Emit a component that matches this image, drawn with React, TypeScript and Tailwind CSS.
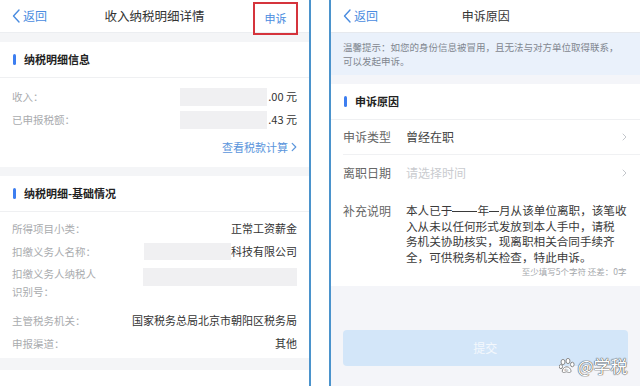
import React from "react";

function BackIcon() {
  return (
    <svg width="8" height="14" viewBox="0 0 8 14" fill="none">
      <path d="M7 1L1.5 7L7 13" stroke="#4a8ce0" strokeWidth="1.4" strokeLinecap="round" strokeLinejoin="round" />
    </svg>
  );
}

function ChevronRight({ color = "#c4c7cc", w = 5, h = 8 }: { color?: string; w?: number; h?: number }) {
  return (
    <svg width={w} height={h} viewBox="0 0 5 8" fill="none">
      <path d="M1 1L4 4L1 7" stroke={color} strokeWidth="1" strokeLinecap="round" strokeLinejoin="round" />
    </svg>
  );
}

function Paw() {
  return (
    <svg width="16" height="16" viewBox="0 0 16 16">
      <g fill="#fff" stroke="#8a8a8a" strokeWidth="1">
        <ellipse cx="4" cy="4" rx="2" ry="2.6" />
        <ellipse cx="9" cy="3" rx="2" ry="2.6" />
        <ellipse cx="13.3" cy="6.5" rx="1.8" ry="2.3" />
        <ellipse cx="1.9" cy="8.6" rx="1.6" ry="2.1" />
        <path d="M4.5 14.5C2.5 14.5 3 11 5.5 9.5C7 8.5 9 8.5 10.5 10C12.5 12 12.5 14.5 10.5 14.5C9 14.5 8 13.8 7.5 13.8C6.8 13.8 6 14.5 4.5 14.5Z" />
      </g>
      <text x="5.2" y="13.3" fontSize="3.6" fill="#8a8a8a" fontFamily="'Liberation Sans', sans-serif">du</text>
    </svg>
  );
}

function SectionTitle({ children }: { children: React.ReactNode }) {
  return (
    <div className="h-[36px] flex items-center pl-[13px] gap-[8px] border-b border-[#eff0f2]">
      <div className="w-[3px] h-[11px] rounded-full bg-[#3d7ef0]" />
      <span className="text-[11px] font-bold text-[#222]">{children}</span>
    </div>
  );
}

function Row({ label, children }: { label: string; children?: React.ReactNode }) {
  return (
    <div className="h-[23px] flex items-center justify-between">
      <span className="text-[10.5px] text-[#a9abae] whitespace-nowrap">{label}</span>
      <div className="flex items-center text-[11px] text-[#333] whitespace-nowrap">{children}</div>
    </div>
  );
}

function Masked({ w, h = 18 }: { w: number; h?: number }) {
  return <div className="bg-[#f0f0f2]" style={{ width: w, height: h }} />;
}

function DetailPanel() {
  return (
    <div className="w-[309px] shrink-0 flex flex-col bg-white">
      <div className="h-[33px] grid grid-cols-[1fr_auto_1fr] items-center border-b border-[#eceef1]">
        <div className="pl-[12px] flex items-center gap-[3px] text-[12px] text-[#4a8ce0]">
          <BackIcon />
          <span>返回</span>
        </div>
        <span className="text-[12.5px] text-[#333]">收入纳税明细详情</span>
        <div className="relative h-full">
          <div className="absolute right-[11px] top-[2px] w-[45px] h-[33px] border-2 border-[#d5343c] flex items-center justify-center text-[11px] text-[#4a8ce0]">
            申诉
          </div>
        </div>
      </div>
      <div className="h-[9px] bg-[#f4f5f7]" />

      <SectionTitle>纳税明细信息</SectionTitle>
      <div className="pt-[7px] px-[12px]">
        <Row label="收入：">
          <Masked w={87} />
          <span className="pl-[1px]">.00 元</span>
        </Row>
        <Row label="已申报税额：">
          <Masked w={87} />
          <span className="pl-[1px]">.43 元</span>
        </Row>
        <div className="h-[20px] mt-[6px] mb-[10px] flex items-center justify-end gap-[3px] text-[11px] text-[#5a95dc]">
          <span>查看税款计算</span>
          <ChevronRight color="#5a95dc" w={6} h={10} />
        </div>
      </div>
      <div className="h-[9px] bg-[#f4f5f7]" />

      <SectionTitle>纳税明细-基础情况</SectionTitle>
      <div className="pt-[5px] pb-[3px] px-[12px]">
        <Row label="所得项目小类：">正常工资薪金</Row>
        <Row label="扣缴义务人名称：">
          <Masked w={87} h={17} />
          <span>科技有限公司</span>
        </Row>
        <div className="h-[46px] flex items-start justify-between pt-[2px]">
          <span className="text-[10.5px] leading-[18px] text-[#a9abae]">
            扣缴义务人纳税人
            <br />
            识别号：
          </span>
          <div className="mt-[3px]">
            <Masked w={154} />
          </div>
        </div>
        <Row label="主管税务机关：">国家税务总局北京市朝阳区税务局</Row>
        <Row label="申报渠道：">其他</Row>
      </div>
      <div className="h-[12px] bg-[#f4f5f7]" />
      <div className="flex-1 bg-white" />
    </div>
  );
}

function AppealPanel() {
  return (
    <div className="relative flex-1 flex flex-col bg-[#f4f5f9]">
      <div className="h-[33px] grid grid-cols-[1fr_auto_1fr] items-center bg-white border-b border-[#e6e9ee]">
        <div className="pl-[12px] flex items-center gap-[3px] text-[12px] text-[#4a8ce0]">
          <BackIcon />
          <span>返回</span>
        </div>
        <span className="text-[12px] text-[#333]">申诉原因</span>
        <div />
      </div>
      <div className="h-[42px] bg-[#eaf1fb] px-[12px] pt-[7px] text-[9.5px] leading-[14px] text-[#7f868f]">
        <div>温馨提示：如您的身份信息被冒用，且无法与对方单位取得联系，</div>
        <div>可以发起申诉。</div>
      </div>
      <div className="h-[9px]" />

      <div className="bg-white">
        <SectionTitle>申诉原因</SectionTitle>
        <div className="pl-[12px]">
          <div className="h-[35px] flex items-center pr-[14px] border-b border-[#f0f1f3] text-[12px]">
            <span className="w-[63px] text-[#666]">申诉类型</span>
            <span className="flex-1 text-[#444]">曾经在职</span>
            <ChevronRight />
          </div>
          <div className="h-[35px] flex items-center pr-[14px] text-[12px]">
            <span className="w-[63px] text-[#666]">离职日期</span>
            <span className="flex-1 text-[#c9cbcf]">请选择时间</span>
            <ChevronRight />
          </div>
          <div className="pt-[13px] pr-[14px] pb-[9px]">
            <div className="flex text-[12px] leading-[15.5px]">
              <span className="w-[63px] shrink-0 text-[#666]">补充说明</span>
              <div className="text-[11.6px] text-[#3a3a3a] whitespace-nowrap">
                <div>
                  本人已于
                  <span className="inline-block w-[25px] border-b border-[#3a3a3a] translate-y-[-3px]" />
                  年
                  <span className="inline-block w-[10px] border-b border-[#3a3a3a] translate-y-[-3px]" />
                  月从该单位离职，该笔收
                </div>
                <div>入从未以任何形式发放到本人手中，请税</div>
                <div>务机关协助核实，现离职相关合同手续齐</div>
                <div>全，可供税务机关检查，特此申诉。</div>
              </div>
            </div>
            <div className="text-right text-[8.5px] leading-[12px] text-[#a4a7ab]">至少填写5个字符 还差：0字</div>
          </div>
        </div>
      </div>

      <div className="mt-[44px] ml-[12px] mr-[13px] h-[36px] rounded-[4px] bg-[#d3e6f9] flex items-center justify-center text-[12px] text-[#f4f8fd]">
        提交
      </div>

      <div className="absolute right-[13px] bottom-[11px] flex items-center gap-[2px]">
        <Paw />
        <span className="text-[17px] leading-[18px] text-white [text-shadow:0_0_1px_#555,0_0_1px_#555,0_0_1px_#555]">@学税</span>
      </div>
    </div>
  );
}

export default function App() {
  return (
    <div className="w-[640px] h-[386px] flex overflow-hidden bg-white font-['Noto_Sans_CJK_SC','Noto_Sans',sans-serif]">
      <DetailPanel />
      <div className="w-[2px] shrink-0 bg-[#4b93cc]" />
      <div className="w-[18px] shrink-0 bg-white" />
      <div className="w-[2px] shrink-0 bg-[#4b93cc]" />
      <AppealPanel />
    </div>
  );
}
